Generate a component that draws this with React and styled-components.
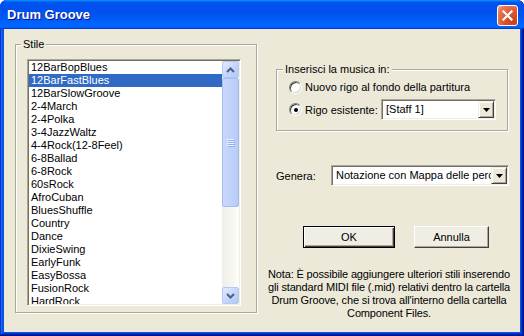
import React from "react";
import styled, { createGlobalStyle } from "styled-components";

const styles = [
  "12BarBopBlues",
  "12BarFastBlues",
  "12BarSlowGroove",
  "2-4March",
  "2-4Polka",
  "3-4JazzWaltz",
  "4-4Rock(12-8Feel)",
  "6-8Ballad",
  "6-8Rock",
  "60sRock",
  "AfroCuban",
  "BluesShuffle",
  "Country",
  "Dance",
  "DixieSwing",
  "EarlyFunk",
  "EasyBossa",
  "FusionRock",
  "HardRock",
];

function CloseIcon() {
  return (
    <svg width="11" height="11" viewBox="0 0 11 11">
      <path d="M1.5 1.5 L9.5 9.5 M9.5 1.5 L1.5 9.5" stroke="#fff" strokeWidth="2.2" strokeLinecap="square" />
    </svg>
  );
}

function Chevron({ up }) {
  return (
    <svg width="9" height="6" viewBox="0 0 9 6">
      <path
        d={up ? "M1 5 L4.5 1.5 L8 5" : "M1 1 L4.5 4.5 L8 1"}
        stroke="#4D6185"
        strokeWidth="2"
        fill="none"
      />
    </svg>
  );
}

function Grip() {
  return (
    <svg width="8" height="8" viewBox="0 0 8 8">
      {[0, 2, 4, 6].map((y) => (
        <g key={y}>
          <rect x="0" y={y} width="7" height="1" fill="#EEF4FE" />
          <rect x="1" y={y + 1} width="7" height="1" fill="#8CB0F8" />
        </g>
      ))}
    </svg>
  );
}

function Combo({ value, width }) {
  return (
    <ComboField $width={width}>
      <ComboText>{value}</ComboText>
      <DropButton>
        <svg width="7" height="4" viewBox="0 0 7 4">
          <path d="M0 0 H7 L3.5 4 Z" fill="#000" />
        </svg>
      </DropButton>
    </ComboField>
  );
}

export default function App() {
  return (
    <>
      <GlobalStyle />
      <Window>
        <TitleBar>
          <Title>Drum Groove</Title>
          <CloseButton>
            <CloseIcon />
          </CloseButton>
        </TitleBar>
        <Body>
          <StyleGroup>
            <Caption>Stile</Caption>
            <ListBox>
              <Items>
                {styles.map((s, i) => (
                  <Item key={s} $selected={i === 1}>
                    {s}
                  </Item>
                ))}
              </Items>
              <ScrollBar>
                <ScrollArrow>
                  <Chevron up />
                </ScrollArrow>
                <Thumb>
                  <Grip />
                </Thumb>
                <Track />
                <ScrollArrow>
                  <Chevron />
                </ScrollArrow>
              </ScrollBar>
            </ListBox>
          </StyleGroup>

          <RightColumn>
            <InsertGroup>
              <Caption>Inserisci la musica in:</Caption>
              <RadioRow>
                <Radio />
                <span>Nuovo rigo al fondo della partitura</span>
              </RadioRow>
              <RadioRow $tall>
                <Radio $checked />
                <span>Rigo esistente:</span>
                <Combo value="[Staff 1]" width={115} />
              </RadioRow>
            </InsertGroup>

            <GenerateRow>
              <GenerateLabel>Genera:</GenerateLabel>
              <Combo value="Notazione con Mappa delle percussioni" width={178} />
            </GenerateRow>

            <ButtonRow>
              <PushButton $default $width={92}>OK</PushButton>
              <PushButton $width={75}>Annulla</PushButton>
            </ButtonRow>

            <Note>
              Nota: È possibile aggiungere ulteriori stili inserendo
              <br />
              gli standard MIDI file (.mid) relativi dentro la cartella
              <br />
              Drum Groove, che si trova all'interno della cartella
              <br />
              Component Files.
            </Note>
          </RightColumn>
        </Body>
      </Window>
    </>
  );
}

const GlobalStyle = createGlobalStyle`
  html, body {
    margin: 0;
    padding: 0;
    background: #fff;
  }
  body {
    font-family: "Liberation Sans", Arial, sans-serif;
    font-size: 11px;
    color: #000;
  }
`;

const Window = styled.div`
  width: 524px;
  height: 336px;
  box-sizing: border-box;
  display: flex;
  flex-direction: column;
  background: #0752e0;
  border-radius: 7px 7px 0 0;
  overflow: hidden;
  box-shadow: inset -1px -1px #00138c, inset 1px 1px #0831d9,
    inset -2px -2px #001ea0, inset 2px 2px #166aee, inset -3px -3px #003bda,
    inset 3px 3px #0855dd;
`;

const TitleBar = styled.div`
  height: 29px;
  flex: 0 0 29px;
  display: flex;
  align-items: center;
  justify-content: space-between;
  padding: 0 6px 0 7px;
  background: linear-gradient(
    180deg,
    #0997ff,
    #0053ee 8%,
    #0050ee 40%,
    #0066ff 88%,
    #0066ff 93%,
    #005bff 95%,
    #003dd7 96%,
    #003dd7
  );
`;

const Title = styled.span`
  font-family: "Liberation Sans", Arial, sans-serif;
  font-weight: bold;
  font-size: 13px;
  color: #fff;
  text-shadow: 1px 1px #0f1089;
`;

const CloseButton = styled.div`
  width: 21px;
  height: 21px;
  box-sizing: border-box;
  margin-top: 1px;
  display: flex;
  align-items: center;
  justify-content: center;
  border: 1px solid #fff;
  border-radius: 3px;
  background: radial-gradient(
    circle at 85% 85%,
    #c9401a 0%,
    #dc5630 45%,
    #e77a57 80%,
    #f3b7a0 100%
  );
`;

const Body = styled.div`
  flex: 1;
  margin: 0 4px 4px 4px;
  background: #ece9d8;
  display: flex;
  gap: 19px;
  padding: 15px 0 0 11px;
`;

const GroupBox = styled.div`
  box-sizing: border-box;
  border: 1px solid #aca899;
  box-shadow: inset 1px 1px #fff, 1px 1px #fff;
  align-self: flex-start;
`;

const StyleGroup = styled(GroupBox)`
  width: 242px;
  padding: 0 14px 6px 11px;
`;

const Caption = styled.div`
  display: table;
  line-height: 13px;
  padding: 0 2px;
  margin: -7px 0 8px -6px;
  background: #ece9d8;
`;

const ListBox = styled.div`
  width: 214px;
  height: 247px;
  box-sizing: border-box;
  display: flex;
  background: #fff;
  border: 1px solid;
  border-color: #aca899 #fff #fff #aca899;
  box-shadow: inset 1px 1px #716f64, inset -1px -1px #f1efe2;
  padding: 1px;
`;

const Items = styled.div`
  flex: 1;
  overflow: hidden;
`;

const Item = styled.div`
  height: 13px;
  line-height: 13px;
  padding-left: 2px;
  white-space: nowrap;
  background: ${(p) => (p.$selected ? "#316ac5" : "transparent")};
  color: ${(p) => (p.$selected ? "#fff" : "#000")};
`;

const ScrollBar = styled.div`
  width: 17px;
  display: flex;
  flex-direction: column;
  background: linear-gradient(90deg, #eeede5, #fdfdfa);
`;

const ScrollArrow = styled.div`
  height: 17px;
  flex: 0 0 17px;
  box-sizing: border-box;
  display: flex;
  align-items: center;
  justify-content: center;
  border: 1px solid #b5c8f3;
  border-radius: 2px;
  background: linear-gradient(135deg, #e2ebfe, #c1d3fb 60%, #b4c8f6);
`;

const Thumb = styled.div`
  flex: 0 0 129px;
  box-sizing: border-box;
  display: flex;
  align-items: center;
  justify-content: center;
  border: 1px solid #a5bbef;
  border-radius: 2px;
  background: linear-gradient(90deg, #c9d8fc, #c1d3fb 50%, #b8cbf8);
`;

const Track = styled.div`
  flex: 1;
`;

const RightColumn = styled.div`
  width: 233px;
  display: flex;
  flex-direction: column;
`;

const InsertGroup = styled(GroupBox)`
  width: 232px;
  margin-top: 25px;
  padding: 0 11px 10px 12px;
`;

const RadioRow = styled.div`
  display: flex;
  align-items: center;
  gap: 3px;
  height: ${(p) => (p.$tall ? "21px" : "20px")};
  margin-top: ${(p) => (p.$tall ? "2px" : "-7px")};
  white-space: nowrap;
`;

const Radio = styled.span`
  width: 13px;
  height: 13px;
  box-sizing: border-box;
  flex: 0 0 13px;
  border-radius: 50%;
  background: #fff;
  border: 1px solid;
  border-color: #808080 #fff #fff #808080;
  box-shadow: inset 1px 1px #404040, inset -1px -1px #d4d0c8;
  display: flex;
  align-items: center;
  justify-content: center;
  &::after {
    content: "";
    width: 4px;
    height: 4px;
    border-radius: 50%;
    background: ${(p) => (p.$checked ? "#000" : "transparent")};
  }
`;

const ComboField = styled.div`
  width: ${(p) => p.$width}px;
  height: 21px;
  box-sizing: border-box;
  margin-left: auto;
  display: flex;
  background: #fff;
  border: 1px solid;
  border-color: #aca899 #fff #fff #aca899;
  box-shadow: inset 1px 1px #716f64, inset -1px -1px #f1efe2;
  padding: 1px;
`;

const ComboText = styled.span`
  flex: 1;
  overflow: hidden;
  white-space: nowrap;
  line-height: 17px;
  padding-left: 3px;
`;

const DropButton = styled.span`
  width: 16px;
  flex: 0 0 16px;
  box-sizing: border-box;
  display: flex;
  align-items: center;
  justify-content: center;
  background: #ece9d8;
  border: 1px solid;
  border-color: #f1efe2 #404040 #404040 #f1efe2;
  box-shadow: inset 1px 1px #fff, inset -1px -1px #aca899;
`;

const GenerateRow = styled.div`
  display: flex;
  align-items: center;
  margin-top: 34px;
`;

const GenerateLabel = styled.span`
  width: 55px;
`;

const ButtonRow = styled.div`
  display: flex;
  gap: 19px;
  margin-top: 40px;
  padding-left: 27px;
`;

const PushButton = styled.div`
  width: ${(p) => p.$width}px;
  height: 22px;
  box-sizing: border-box;
  display: flex;
  align-items: center;
  justify-content: center;
  background: #f0eee4;
  border: 1px solid;
  border-color: ${(p) =>
    p.$default ? "#000" : "#fff #404040 #404040 #fff"};
  box-shadow: ${(p) =>
    p.$default
      ? "inset 1px 1px #fff, inset -1px -1px #404040, inset -2px -2px #aca899"
      : "inset -1px -1px #aca899"};
`;

const Note = styled.p`
  margin: 20px 0 0 -12px;
  width: 250px;
  text-align: center;
  line-height: 13px;
  white-space: nowrap;
  letter-spacing: -0.15px;
`;
